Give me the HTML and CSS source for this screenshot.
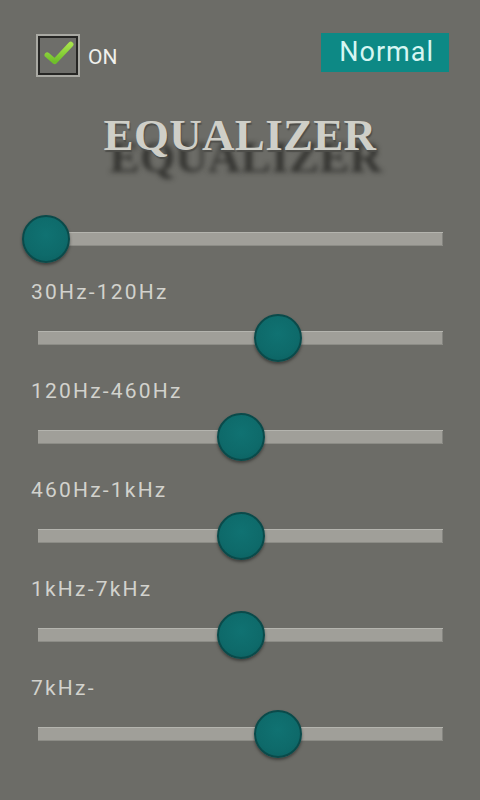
FILE: index.html
```html
<!DOCTYPE html>
<html>
<head>
<meta charset="utf-8">
<link rel="stylesheet" href="styles.css">
</head>
<body>
<div class="screen">
  <div class="header">
    <div class="toggle">
      <div class="checkbox">
        <svg width="30" height="26" viewBox="0 0 28 24">
          <defs>
            <linearGradient id="g" x1="0" y1="0" x2="0" y2="1">
              <stop offset="0" stop-color="#a6e34a"/>
              <stop offset="1" stop-color="#6fbf2a"/>
            </linearGradient>
          </defs>
          <path d="M3 13 L10 19 L25 3" fill="none" stroke="url(#g)" stroke-width="5" stroke-linecap="round" stroke-linejoin="round"/>
        </svg>
      </div>
      <span class="on">ON</span>
    </div>
    <div class="preset">Normal</div>
  </div>
  <h1 class="title">EQUALIZER</h1>
  <div class="bands">
    <div class="band first">
      <div class="slider"><div class="track"></div><div class="thumb" style="left: 2%"></div></div>
    </div>
    <div class="band">
      <div class="label">30Hz-120Hz</div>
      <div class="slider"><div class="track"></div><div class="thumb" style="left: 59.3%"></div></div>
    </div>
    <div class="band">
      <div class="label">120Hz-460Hz</div>
      <div class="slider"><div class="track"></div><div class="thumb" style="left: 50%"></div></div>
    </div>
    <div class="band">
      <div class="label">460Hz-1kHz</div>
      <div class="slider"><div class="track"></div><div class="thumb" style="left: 50%"></div></div>
    </div>
    <div class="band">
      <div class="label">1kHz-7kHz</div>
      <div class="slider"><div class="track"></div><div class="thumb" style="left: 50%"></div></div>
    </div>
    <div class="band">
      <div class="label">7kHz-</div>
      <div class="slider"><div class="track"></div><div class="thumb" style="left: 59.3%"></div></div>
    </div>
  </div>
</div>
</body>
</html>
```
FILE: styles.css
```css
html, body {
  margin: 0;
  padding: 0;
  background: #6c6c67;
}
.screen {
  width: 480px;
  height: 800px;
  background: #6c6c67;
  font-family: Roboto, "Liberation Sans", sans-serif;
  box-sizing: border-box;
  padding-top: 33px;
}
.header {
  display: flex;
  justify-content: space-between;
  align-items: flex-start;
  padding: 0 31px 0 36px;
}
.toggle {
  display: flex;
  align-items: center;
  gap: 8px;
  margin-top: 1px;
}
.checkbox {
  width: 44px;
  height: 43px;
  box-sizing: border-box;
  border: 2px solid #a9a9a3;
  box-shadow: inset 0 0 0 2px #262624;
  background: #6e6e6a;
  display: flex;
  align-items: center;
  justify-content: center;
}
.checkbox svg {
  margin-top: -3px;
  margin-left: 2px;
}
.on {
  color: #f0f0ec;
  font-size: 21px;
  margin-top: 2px;
}
.preset {
  background: #0d8985;
  color: #d6f6f2;
  font-size: 27px;
  letter-spacing: 1px;
  line-height: 39px;
  padding: 0 15px 0 18px;
}
.title {
  margin: 32px 0 0 0;
  text-align: center;
  font-family: "Liberation Serif", serif;
  font-weight: bold;
  font-size: 45px;
  line-height: 52px;
  color: #cfcfc8;
  letter-spacing: 0.3px;
  text-shadow: 1px 2px 1px #4e4e4a, 6px 22px 5px rgba(35, 35, 32, 0.75);
}
.bands {
  display: flex;
  flex-direction: column;
  padding: 54px 37px 0 38px;
  gap: 15px;
}
.label {
  color: #d2d2cd;
  font-size: 21px;
  letter-spacing: 2.2px;
  margin-left: -7px;
  line-height: 28px;
  height: 28px;
}
.band {
  display: flex;
  flex-direction: column;
  gap: 8px;
}
.slider {
  position: relative;
  height: 48px;
  display: flex;
  align-items: center;
}
.track {
  width: 100%;
  height: 14px;
  background: #a09f99;
  box-shadow: inset 0 1px 0 #b4b4ae, inset 0 -1px 0 #8c8c86, inset -1px 0 0 #84847f;
}
.thumb {
  position: absolute;
  top: 0;
  width: 48px;
  height: 48px;
  margin-left: -24px;
  border-radius: 50%;
  box-sizing: border-box;
  background: radial-gradient(circle at 50% 40%, #107272 0%, #0e6a6a 60%, #0b5e5e 100%);
  border: 2px solid #0a4a4a;
  box-shadow: 0 2px 3px rgba(30, 30, 28, 0.55);
}
```
